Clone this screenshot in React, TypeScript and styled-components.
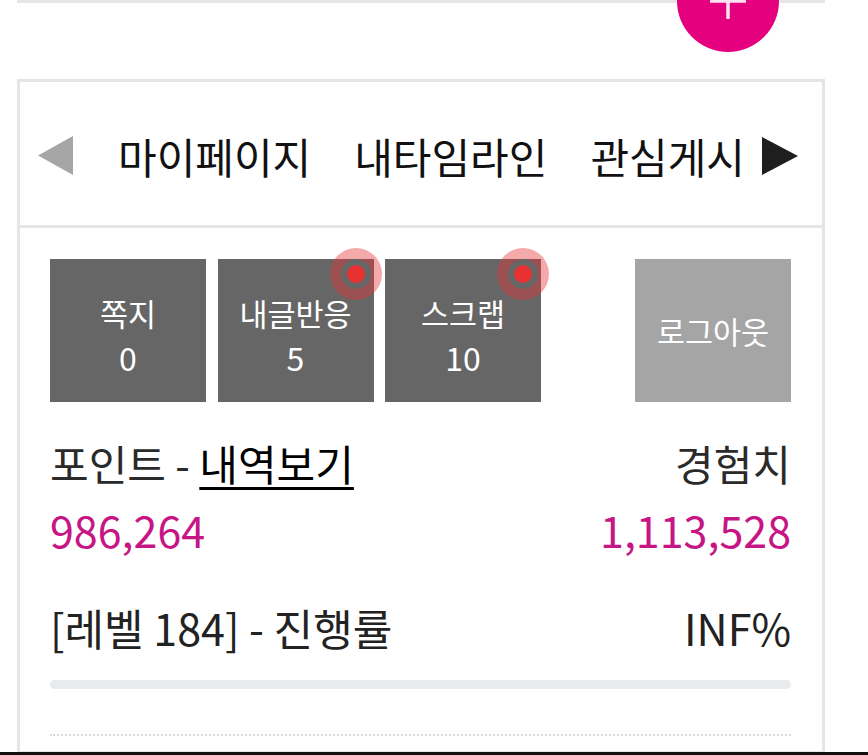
import React from "react";
import styled, { createGlobalStyle } from "styled-components";

const Global = createGlobalStyle`
  html, body { margin: 0; padding: 0; background: #fff; }
  body {
    font-family: "Noto Sans CJK KR", "Noto Sans", sans-serif;
    color: #222;
    overflow: hidden;
  }
  * { box-sizing: border-box; }
`;

const Page = styled.div`
  position: relative;
  width: 868px;
  height: 755px;
  padding: 0 43px 0 17px;
  overflow: hidden;
`;

const PrevCard = styled.div`
  height: 3px;
  border: 3px solid #e6e6e6;
  border-top: none;
`;

const Fab = styled.button`
  position: absolute;
  top: -50px;
  left: 677px;
  width: 102px;
  height: 102px;
  border-radius: 50%;
  border: none;
  padding: 0;
  background: #e4007f;
  display: flex;
  align-items: center;
  justify-content: center;
`;

const Card = styled.section`
  margin-top: 76px;
  border: 3px solid #e5e5e5;
  background: #fff;
`;

const TabBar = styled.nav`
  height: 146px;
  padding: 4px 24px 0 18px;
  border-bottom: 3px solid #e5e5e5;
  display: flex;
  align-items: center;
`;

const Arrow = styled.svg`
  flex: none;
  display: block;
`;

const TabScroller = styled.div`
  flex: 1;
  margin: 0 18px 0 45px;
  overflow: hidden;
  display: flex;
  gap: 43px;
  white-space: nowrap;
`;

const Tab = styled.a`
  flex: none;
  font-size: 42px;
  line-height: 54px;
  color: #111;
  text-decoration: none;
`;

const Body = styled.div`
  padding: 31px 31px 15px 30px;
`;

const ButtonRow = styled.div`
  display: flex;
  gap: 11.5px;
`;

const StatButton = styled.a<{ $muted?: boolean }>`
  position: relative;
  width: 156px;
  height: 143px;
  flex: none;
  padding-top: ${(p) => (p.$muted ? "0" : "8px")};
  background: ${(p) => (p.$muted ? "#a5a5a5" : "#666666")};
  color: #fff;
  text-decoration: none;
  display: flex;
  flex-direction: column;
  align-items: center;
  justify-content: center;
  ${(p) => (p.$muted ? "margin-left: auto;" : "")}
`;

const BtnLabel = styled.span`
  font-size: 30.5px;
  line-height: 44px;
`;

const BtnCount = styled.span`
  font-size: 32px;
  line-height: 44px;
`;

const Badge = styled.span`
  position: absolute;
  top: -1px;
  right: 2px;
  width: 32px;
  height: 32px;
  border-radius: 50%;
  border: 7px solid transparent;
  background: #e83232;
  background-clip: content-box;
  box-shadow: 0 0 0 10px rgba(228, 52, 52, 0.42);
`;

const StatGrid = styled.div`
  margin-top: 28px;
  display: grid;
  grid-template-columns: 1fr auto;
`;

const Label = styled.div<{ $right?: boolean }>`
  font-size: 42px;
  line-height: 66px;
  color: #2a2a2a;
  text-align: ${(p) => (p.$right ? "right" : "left")};
`;

const Link = styled.a`
  color: #000;
  text-decoration: underline;
  text-decoration-thickness: 3px;
  text-underline-offset: 6px;
`;

const Amount = styled.div<{ $right?: boolean }>`
  font-size: 43px;
  line-height: 66px;
  color: #c71585;
  text-align: ${(p) => (p.$right ? "right" : "left")};
`;

const LevelRow = styled.div`
  margin-top: 32px;
  display: flex;
  justify-content: space-between;
  font-size: 43px;
  line-height: 66px;
  color: #222;
`;

const Progress = styled.div`
  margin-top: 20px;
  height: 9px;
  border-radius: 5px;
  background: #e9eaeb;
`;

const Dotted = styled.div`
  margin-top: 45px;
  border-top: 2px dotted #d9d9d9;
`;

const BottomBar = styled.div`
  position: fixed;
  left: 0;
  right: 0;
  bottom: 0;
  height: 3px;
  background: #111;
`;

const stats = [
  { label: "쪽지", count: 0, badge: false },
  { label: "내글반응", count: 5, badge: true },
  { label: "스크랩", count: 10, badge: true },
];

export default function App() {
  return (
    <>
      <Global />
      <Page>
        <PrevCard />
        <Fab aria-label="추가">
          <svg width="38" height="38" viewBox="0 0 38 38">
            <path d="M19 1v36M1 19h36" stroke="#fbe3f1" strokeWidth="3.5" />
          </svg>
        </Fab>
        <Card>
          <TabBar>
            <Arrow width="35" height="39" viewBox="0 0 35 39">
              <polygon points="35,0 35,39 0,19.5" fill="#a6a6a6" />
            </Arrow>
            <TabScroller>
              <Tab>마이페이지</Tab>
              <Tab>내타임라인</Tab>
              <Tab>관심게시판</Tab>
              <Tab>설정</Tab>
            </TabScroller>
            <Arrow width="36" height="38" viewBox="0 0 36 38">
              <polygon points="0,0 0,38 36,19" fill="#1e1e1e" />
            </Arrow>
          </TabBar>
          <Body>
            <ButtonRow>
              {stats.map((s) => (
                <StatButton key={s.label}>
                  {s.badge && <Badge />}
                  <BtnLabel>{s.label}</BtnLabel>
                  <BtnCount>{s.count}</BtnCount>
                </StatButton>
              ))}
              <StatButton $muted>
                <BtnLabel>로그아웃</BtnLabel>
              </StatButton>
            </ButtonRow>
            <StatGrid>
              <Label>
                포인트 - <Link>내역보기</Link>
              </Label>
              <Label $right>경험치</Label>
              <Amount>986,264</Amount>
              <Amount $right>1,113,528</Amount>
            </StatGrid>
            <LevelRow>
              <span>[레벨 184] - 진행률</span>
              <span>INF%</span>
            </LevelRow>
            <Progress />
            <Dotted />
          </Body>
        </Card>
        <BottomBar />
      </Page>
    </>
  );
}
